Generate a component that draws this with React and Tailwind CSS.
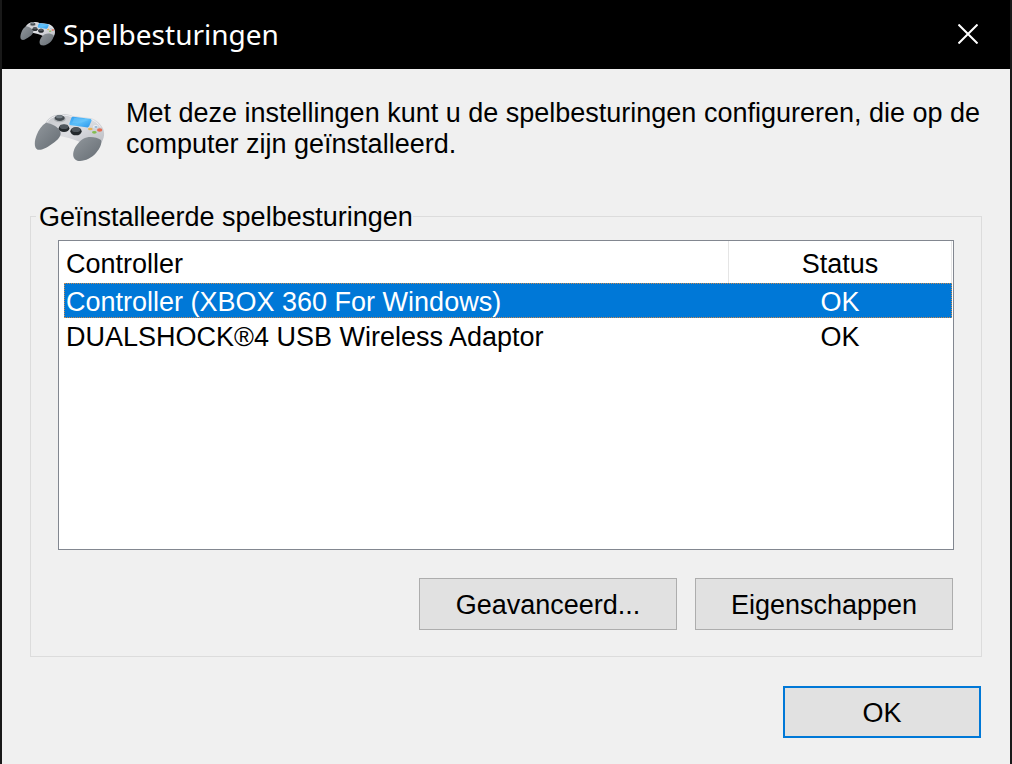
import React, { useId } from 'react';

const controllers = [
  { name: 'Controller (XBOX 360 For Windows)', status: 'OK', selected: true },
  { name: 'DUALSHOCK®4 USB Wireless Adaptor', status: 'OK', selected: false },
];

function GamepadIcon({ className }) {
  const id = useId();
  return (
    <svg className={className} viewBox="42 36 216 150" aria-hidden="true">
      <defs>
        <linearGradient id={`${id}body`} x1="0" y1="0" x2="1" y2="1">
          <stop offset="0" stopColor="#c4c6ca" />
          <stop offset="0.5" stopColor="#dcdde1" />
          <stop offset="1" stopColor="#b9bbc1" />
        </linearGradient>
        <linearGradient id={`${id}grip`} x1="0" y1="0" x2="1" y2="1">
          <stop offset="0" stopColor="#92989d" />
          <stop offset="1" stopColor="#656c73" />
        </linearGradient>
        <linearGradient id={`${id}screen`} x1="0" y1="0" x2="1" y2="1">
          <stop offset="0" stopColor="#2f9cf0" />
          <stop offset="0.5" stopColor="#5cc0fa" />
          <stop offset="1" stopColor="#2b97ea" />
        </linearGradient>
      </defs>
      <path
        d="M76 70C86 52 104 42 124 44C136 39 148 44 158 48L210 54C224 56 238 66 247 82C256 98 253 116 243 130L196 138C180 122 156 116 130 110L98 104Z"
        fill={`url(#${id}body)`}
      />
      <path d="M82 66C92 52 108 46 124 48C137 43 148 48 158 51L208 57C222 60 234 69 242 82" fill="none" stroke="#eeeff2" strokeWidth="3" />
      <path d="M78 68C95 70 116 81 121 95C125 108 114 119 100 129C84 141 67 152 53 149C41 145 43 122 50 105C56 89 65 76 78 68Z" fill={`url(#${id}grip)`} />
      <path d="M190 116C205 107 229 110 243 120C247 131 239 146 228 159C214 175 190 186 172 182C156 177 157 157 166 141C173 130 181 121 190 116Z" fill={`url(#${id}grip)`} />
      <path d="M160 50L210 56C214 57 216 60 214 64L208 77C206 81 203 83 198 82L153 76C148 75 147 72 149 68L154 54C155 51 157 50 160 50Z" fill={`url(#${id}screen)`} />
      <path d="M163 53L208 59L184 68L156 70Z" fill="#70c8fa" opacity="0.5" />
      <ellipse cx="119" cy="57" rx="18" ry="10" fill="#aeb2b6" />
      <ellipse cx="119" cy="54" rx="15" ry="9" fill="#454c51" />
      <ellipse cx="118" cy="50" rx="10" ry="5" fill="#778087" />
      <ellipse cx="132" cy="85" rx="16" ry="11" fill="#24292d" />
      <ellipse cx="132" cy="80" rx="13" ry="7" fill="#50575d" />
      <ellipse cx="168" cy="94" rx="17" ry="12" fill="#24292d" />
      <ellipse cx="168" cy="89" rx="13" ry="7" fill="#50575d" />
      <ellipse cx="227" cy="80" rx="8" ry="5" fill="#eef0f2" />
      <ellipse cx="228" cy="81" rx="5" ry="3" fill="#97b8d4" />
      <ellipse cx="211" cy="87" rx="7" ry="4" fill="#e8b455" />
      <ellipse cx="239" cy="90" rx="8" ry="5" fill="#e66c51" />
      <ellipse cx="223" cy="97" rx="7" ry="4" fill="#85bd50" />
    </svg>
  );
}

function Button({ children, className }) {
  return (
    <button type="button" className={`h-[52px] bg-[#e1e1e1] pt-[2px] ${className}`}>
      {children}
    </button>
  );
}

export default function App() {
  return (
    <div className="flex min-h-screen flex-col border-x-2 border-[#191919] bg-[#f0f0f0] font-['Liberation_Sans',Arial,sans-serif] text-[27px] leading-[31px] text-black">
      <header className="flex h-[69px] items-center bg-black pb-[2px] pl-[18px] pr-8 text-white">
        <GamepadIcon className="h-[25px] w-9" />
        <h1 className="ml-[7px] flex-1 font-['Noto_Sans','Open_Sans',sans-serif] text-[28px] leading-9">
          Spelbesturingen
        </h1>
        <button type="button" aria-label="Sluiten" className="flex size-5 items-center justify-center">
          <svg className="size-5" viewBox="0 0 20 20" fill="none" stroke="currentColor" strokeWidth="2">
            <path d="M.5.5l19 19M19.5.5l-19 19" />
          </svg>
        </button>
      </header>

      <main className="flex flex-col px-7 pt-[29px]">
        <div className="flex items-start">
          <GamepadIcon className="ml-1 mt-[14px] h-[50px] w-[72px] shrink-0" />
          <p className="ml-5 flex-1">
            Met deze instellingen kunt u de spelbesturingen configureren, die op de computer zijn geïnstalleerd.
          </p>
        </div>

        <fieldset className="mt-[38px] min-w-0 border border-[#dcdcdc] px-[27px] pb-[26px]">
          <legend className="-ml-[22px] pl-[3px] pt-[2px]">Geïnstalleerde spelbesturingen</legend>
          <div className="mt-[7px] h-[310px] border border-[#828790] bg-white pl-[5px] pr-px">
            <table className="w-full table-fixed border-collapse">
              <thead>
                <tr className="h-[42px]">
                  <th className="border-r border-[#e5e5e5] pl-[2px] pt-1 text-left font-normal">Controller</th>
                  <th className="w-[223px] border-r border-[#e5e5e5] pt-1 text-center font-normal">Status</th>
                </tr>
              </thead>
              <tbody>
                {controllers.map((c) => (
                  <tr
                    key={c.name}
                    className={
                      c.selected
                        ? 'h-[35px] bg-[#0078d7] text-white outline-1 -outline-offset-1 outline-dotted outline-[#c88a50]'
                        : 'h-[35px]'
                    }
                  >
                    <td className="pl-[2px] pt-1">{c.name}</td>
                    <td className="pt-1 text-center">{c.status}</td>
                  </tr>
                ))}
              </tbody>
            </table>
          </div>
          <div className="mt-7 flex justify-end gap-[18px] pr-px">
            <Button className="w-[258px] border border-[#adadad]">Geavanceerd...</Button>
            <Button className="w-[258px] border border-[#adadad]">Eigenschappen</Button>
          </div>
        </fieldset>

        <div className="mt-[29px] flex justify-end pb-[26px] pr-px">
          <Button className="w-[198px] border-2 border-[#0078d7]">OK</Button>
        </div>
      </main>
    </div>
  );
}
